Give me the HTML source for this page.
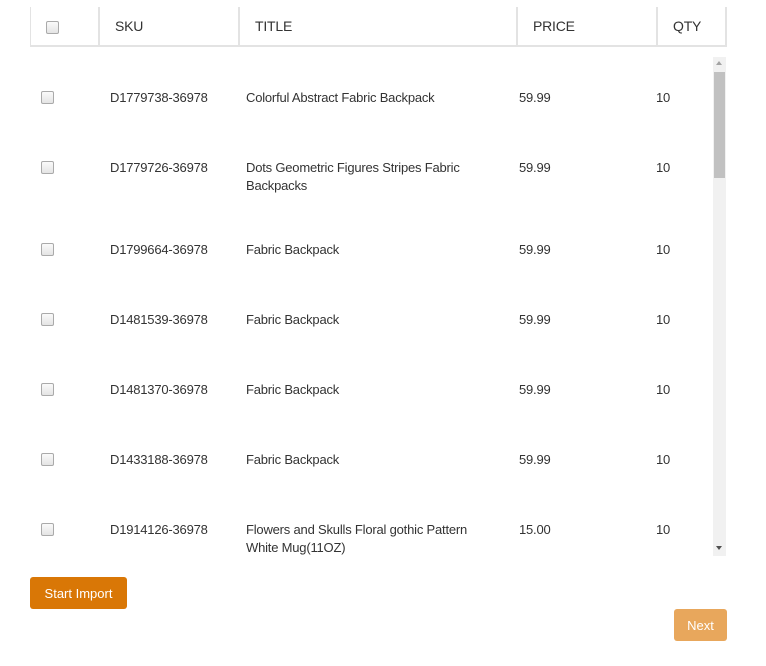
<!DOCTYPE html>
<html><head><style>
body{margin:0;width:766px;height:666px;background:#fff;font-family:"Liberation Sans",sans-serif;color:#333;position:relative;overflow:hidden}
.a{position:absolute;white-space:nowrap}
.hd{font-size:14px;top:18px;letter-spacing:-0.2px}
.t{font-size:13px;line-height:18px;letter-spacing:-0.2px}
.vl{position:absolute;top:7px;height:39px;width:2px;background:#e3e3e3}
.cb{position:absolute;width:11px;height:11px;border:1px solid #aaa;border-radius:2px;background:linear-gradient(#fafafa,#e4e4e4)}
.btn{position:absolute;color:#fff;font-size:13px;border-radius:3px;text-align:center;line-height:33px}
</style></head><body>
<div class="a" style="left:30px;top:45px;width:697px;height:2px;background:#e3e3e3"></div>
<div class="vl" style="left:30px;width:1px"></div>
<div class="vl" style="left:98px"></div>
<div class="vl" style="left:238px"></div>
<div class="vl" style="left:516px"></div>
<div class="vl" style="left:656px"></div>
<div class="vl" style="left:725px"></div>
<div class="cb" style="left:46px;top:21px"></div>
<div class="a hd" style="left:115px">SKU</div>
<div class="a hd" style="left:255px">TITLE</div>
<div class="a hd" style="left:533px">PRICE</div>
<div class="a hd" style="left:673px">QTY</div>

<div class="a" style="left:713px;top:57px;width:13px;height:499px;background:#f1f1f1"></div>
<div class="a" style="left:714px;top:72px;width:11px;height:106px;background:#c1c1c1"></div>
<div class="a" style="left:716px;top:61px;border-left:3px solid transparent;border-right:3px solid transparent;border-bottom:4px solid #a3a3a3;width:0;height:0"></div>
<div class="a" style="left:716px;top:546px;border-left:3px solid transparent;border-right:3px solid transparent;border-top:4px solid #505050;width:0;height:0"></div>

<div class="cb" style="left:41px;top:91px"></div><div class="a t" style="left:110px;top:89px">D1779738-36978</div><div class="a t" style="left:246px;top:89px">Colorful Abstract Fabric Backpack</div><div class="a t" style="left:519px;top:89px">59.99</div><div class="a t" style="left:656px;top:89px">10</div>
<div class="cb" style="left:41px;top:161px"></div><div class="a t" style="left:110px;top:159px">D1779726-36978</div><div class="a t" style="left:246px;top:159px">Dots Geometric Figures Stripes Fabric<br>Backpacks</div><div class="a t" style="left:519px;top:159px">59.99</div><div class="a t" style="left:656px;top:159px">10</div>
<div class="cb" style="left:41px;top:243px"></div><div class="a t" style="left:110px;top:241px">D1799664-36978</div><div class="a t" style="left:246px;top:241px">Fabric Backpack</div><div class="a t" style="left:519px;top:241px">59.99</div><div class="a t" style="left:656px;top:241px">10</div>
<div class="cb" style="left:41px;top:313px"></div><div class="a t" style="left:110px;top:311px">D1481539-36978</div><div class="a t" style="left:246px;top:311px">Fabric Backpack</div><div class="a t" style="left:519px;top:311px">59.99</div><div class="a t" style="left:656px;top:311px">10</div>
<div class="cb" style="left:41px;top:383px"></div><div class="a t" style="left:110px;top:381px">D1481370-36978</div><div class="a t" style="left:246px;top:381px">Fabric Backpack</div><div class="a t" style="left:519px;top:381px">59.99</div><div class="a t" style="left:656px;top:381px">10</div>
<div class="cb" style="left:41px;top:453px"></div><div class="a t" style="left:110px;top:451px">D1433188-36978</div><div class="a t" style="left:246px;top:451px">Fabric Backpack</div><div class="a t" style="left:519px;top:451px">59.99</div><div class="a t" style="left:656px;top:451px">10</div>
<div class="cb" style="left:41px;top:523px"></div><div class="a t" style="left:110px;top:521px">D1914126-36978</div><div class="a t" style="left:246px;top:521px">Flowers and Skulls Floral gothic Pattern<br>White Mug(11OZ)</div><div class="a t" style="left:519px;top:521px">15.00</div><div class="a t" style="left:656px;top:521px">10</div>

<div class="btn" style="left:30px;top:577px;width:97px;height:32px;background:#d97706">Start Import</div>
<div class="btn" style="left:674px;top:609px;width:53px;height:32px;background:#e8a75c">Next</div>
</body></html>
